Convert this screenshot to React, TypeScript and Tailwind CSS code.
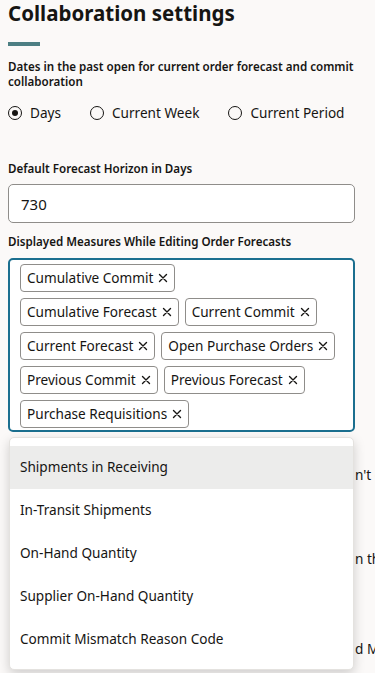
import { useState } from 'react';

const selected = [
  'Cumulative Commit',
  'Cumulative Forecast',
  'Current Commit',
  'Current Forecast',
  'Open Purchase Orders',
  'Previous Commit',
  'Previous Forecast',
  'Purchase Requisitions',
];

const options = [
  'Shipments in Receiving',
  'In-Transit Shipments',
  'On-Hand Quantity',
  'Supplier On-Hand Quantity',
  'Commit Mismatch Reason Code',
];

const radios = ['Days', 'Current Week', 'Current Period'];

function Cross() {
  return (
    <svg width="10" height="10" viewBox="0 0 10 10" fill="none" stroke="#161513" strokeWidth="1.4" strokeLinecap="round">
      <path d="M1.5 1.5l7 7M8.5 1.5l-7 7" />
    </svg>
  );
}

// text sitting behind the open dropdown, only its tail shows at the right edge
function HiddenRow({ head, tail, className }: { head: string; tail: string; className: string }) {
  return (
    <div className={`flex whitespace-nowrap pl-1 text-[13.6px] leading-[20px] ${className}`}>
      <span className="w-[343px] shrink-0 overflow-hidden">{head}</span>
      <span>{tail}</span>
    </div>
  );
}

export default function App() {
  const [period, setPeriod] = useState('Days');

  return (
    <div
      className="relative min-h-[673px] overflow-hidden bg-[#fbf9f8] pl-2 pr-5 text-[#161513]"
      style={{ fontFamily: '"Noto Sans", "Open Sans", sans-serif' }}
    >
      {/* Header */}
      <h1 className="text-[20.5px] leading-[26px] font-bold">Collaboration settings</h1>
      <div className="mt-4 h-1 w-8 bg-[#4d7f83]" />

      {/* Past dates */}
      <p className="mt-[13px] text-[11.6px] leading-[15px] font-semibold">
        Dates in the past open for current order forecast and commit collaboration
      </p>
      <div className="mt-3 flex h-6 items-center gap-[29px]">
        {radios.map(r => (
          <button key={r} onClick={() => setPeriod(r)} className="flex items-center gap-2 text-[13.6px]">
            <span className="flex h-[14px] w-[14px] items-center justify-center rounded-full border-[1.5px] border-[#161513]">
              {period === r && <span className="h-[6px] w-[6px] rounded-full bg-[#161513]" />}
            </span>
            {r}
          </button>
        ))}
      </div>

      {/* Horizon */}
      <label className="mt-9 block text-[11.6px] leading-4 font-semibold">Default Forecast Horizon in Days</label>
      <input
        defaultValue="730"
        className="mt-[7px] h-[39px] w-full rounded-[5px] border border-[#8f8d8a] bg-white px-3 text-[15px] outline-none"
      />

      {/* Measures */}
      <label className="mt-[11px] block text-[11.6px] leading-4 font-semibold">
        Displayed Measures While Editing Order Forecasts
      </label>
      <div className="mt-2 flex h-[174px] flex-wrap content-start gap-[6px] rounded-[5px] border-2 border-[#1b6f8f] bg-white pt-1 pl-[10px] pr-[17px]">
        {selected.map(m => (
          <span
            key={m}
            className="inline-flex h-[28px] items-center gap-[5px] rounded-[4px] border border-[#8f8d8a] bg-white pl-[6px] pr-[6px] text-[13.6px]"
          >
            {m}
            <Cross />
          </span>
        ))}
      </div>

      {/* Settings under the popup */}
      <HiddenRow className="mt-[33px]" head="Allow suppliers to submit commits when they do" tail="n't commit" />
      <HiddenRow className="mt-[64px]" head="Number of days to keep supplier responses i" tail="n the period" />
      <HiddenRow className="mt-[70px]" head="Enable Commit Mismatch Reason Codes an" tail="d Messages" />

      {/* Dropdown */}
      <div className="absolute top-[437px] left-[9px] w-[345px] rounded-[5px] border border-[#e4e2df] bg-white py-2 shadow-[0_4px_12px_rgba(0,0,0,0.18)]">
        {options.map((o, i) => (
          <div
            key={o}
            className={`flex h-[43px] items-center px-[10px] text-[13.6px] ${i === 0 ? 'bg-[#ececeb]' : ''}`}
          >
            {o}
          </div>
        ))}
      </div>
    </div>
  );
}
